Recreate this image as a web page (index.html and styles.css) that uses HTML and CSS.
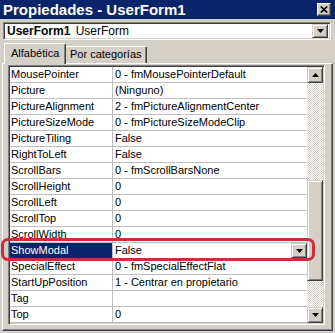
FILE: index.html
```html
<!DOCTYPE html>
<html lang="es">
<head>
    <meta charset="UTF-8">
    <meta name="viewport" content="width=device-width, initial-scale=1.0">
    <title>Propiedades</title>
    <link rel="stylesheet" href="styles.css">
</head>
<body>
    <div class="window">
        <div class="titlebar">
            <span class="title">Propiedades - UserForm1</span>
            <span class="close-btn">
                <svg width="8" height="7" viewBox="0 0 8 7"><path d="M0.8 0.5 L7.2 6.5 M7.2 0.5 L0.8 6.5" stroke="#000" stroke-width="1.7"/></svg>
            </span>
        </div>

        <div class="objcombo">
            <span class="objname"><b>UserForm1</b> UserForm</span>
            <span class="btn3d drop-btn">
                <svg width="7" height="4" viewBox="0 0 7 4"><polygon points="0,0 7,0 3.5,4" fill="#000"/></svg>
            </span>
        </div>

        <div class="tabs">
            <div class="tab active">Alfabética</div>
            <div class="tab">Por categorías</div>
        </div>

        <div class="panel">
            <div class="grid">
                <div class="rows">
                    <div class="row"><div class="name">MousePointer</div><div class="value">0 - fmMousePointerDefault</div></div>
                    <div class="row"><div class="name">Picture</div><div class="value">(Ninguno)</div></div>
                    <div class="row"><div class="name">PictureAlignment</div><div class="value">2 - fmPictureAlignmentCenter</div></div>
                    <div class="row"><div class="name">PictureSizeMode</div><div class="value">0 - fmPictureSizeModeClip</div></div>
                    <div class="row"><div class="name">PictureTiling</div><div class="value">False</div></div>
                    <div class="row"><div class="name">RightToLeft</div><div class="value">False</div></div>
                    <div class="row"><div class="name">ScrollBars</div><div class="value">0 - fmScrollBarsNone</div></div>
                    <div class="row"><div class="name">ScrollHeight</div><div class="value">0</div></div>
                    <div class="row"><div class="name">ScrollLeft</div><div class="value">0</div></div>
                    <div class="row"><div class="name">ScrollTop</div><div class="value">0</div></div>
                    <div class="row"><div class="name">ScrollWidth</div><div class="value">0</div></div>
                    <div class="row selected">
                        <div class="name">ShowModal</div>
                        <div class="value">
                            <span>False</span>
                            <span class="btn3d cell-btn">
                                <svg width="7" height="4" viewBox="0 0 7 4"><polygon points="0,0 7,0 3.5,4" fill="#000"/></svg>
                            </span>
                        </div>
                    </div>
                    <div class="row"><div class="name">SpecialEffect</div><div class="value">0 - fmSpecialEffectFlat</div></div>
                    <div class="row"><div class="name">StartUpPosition</div><div class="value">1 - Centrar en propietario</div></div>
                    <div class="row"><div class="name">Tag</div><div class="value"></div></div>
                    <div class="row"><div class="name">Top</div><div class="value">0</div></div>
                </div>

                <div class="scrollbar">
                    <span class="btn3d scroll-btn">
                        <svg width="7" height="4" viewBox="0 0 7 4"><polygon points="3.5,0 7,4 0,4" fill="#000"/></svg>
                    </span>
                    <div class="track-top"></div>
                    <div class="btn3d thumb"></div>
                    <div class="track-bottom"></div>
                    <span class="btn3d scroll-btn">
                        <svg width="7" height="4" viewBox="0 0 7 4"><polygon points="0,0 7,0 3.5,4" fill="#000"/></svg>
                    </span>
                </div>
            </div>
        </div>

        <!-- marca roja alrededor de ShowModal -->
        <div class="mark"></div>
    </div>
</body>
</html>
```

FILE: styles.css
```css
body {
    margin: 0;
    background-color: #d4d0c8;
    font-family: "Liberation Sans", Arial, sans-serif;
    font-size: 11px;
    color: #000;
}

.window {
    position: relative;
    width: 335px;
    height: 333px;
    overflow: hidden;
}

.titlebar {
    height: 19px;
    background-color: #0a246a;
    display: flex;
    align-items: center;
    justify-content: space-between;
    padding: 0 4px 0 3px;
}

.title {
    color: #fff;
    font-weight: bold;
    font-size: 15px;
}

.close-btn {
    box-sizing: border-box;
    width: 14px;
    height: 13px;
    background-color: #d4d0c8;
    border: 1px solid;
    border-color: #fff #404040 #404040 #fff;
    box-shadow: inset -1px -1px #808080;
    display: flex;
    align-items: center;
    justify-content: center;
}

.btn3d {
    box-sizing: border-box;
    background-color: #d4d0c8;
    border: 1px solid;
    border-color: #d4d0c8 #404040 #404040 #d4d0c8;
    box-shadow: inset 1px 1px #fff, inset -1px -1px #808080;
    display: flex;
    align-items: center;
    justify-content: center;
}

.objcombo {
    box-sizing: border-box;
    height: 18px;
    margin: 3px 4px 0 3px;
    background-color: #fff;
    border: 1px solid;
    border-color: #808080 #fff #fff #808080;
    box-shadow: inset 1px 1px #404040, inset -1px -1px #d4d0c8;
    display: flex;
    align-items: center;
    justify-content: space-between;
    padding: 1px 2px 1px 3px;
    font-size: 12px;
}

.objname b {
    margin-right: 2px;
}

.drop-btn {
    width: 16px;
    height: 14px;
}

.tabs {
    display: flex;
    align-items: flex-end;
    height: 20px;
    margin-top: 3px;
    padding-left: 4px;
}

.tab {
    box-sizing: border-box;
    height: 17px;
    padding: 0 4px 0 4px;
    line-height: 15px;
    white-space: nowrap;
    border: 1px solid;
    border-bottom: none;
    border-color: #fff #404040 #fff #fff;
    border-radius: 2px 2px 0 0;
    box-shadow: inset -1px 0 #808080;
}

.tab.active {
    position: relative;
    z-index: 1;
    height: 21px;
    width: 62px;
    margin-bottom: -1px;
    line-height: 19px;
    padding: 0 0 0 6px;
    background-color: #d4d0c8;
}

.tab + .tab {
    border-left: none;
}

.panel {
    box-sizing: border-box;
    height: 268px;
    margin: 0 2px;
    border: 1px solid;
    border-color: #fff #404040 #404040 #fff;
    box-shadow: inset -1px -1px #808080;
    padding: 1px 0 0 5px;
}

.grid {
    box-sizing: border-box;
    width: 317px;
    height: 260px;
    border: 1px solid;
    border-color: #808080 #fff #fff #808080;
    box-shadow: inset 1px 1px #404040, inset -1px -1px #d4d0c8;
    padding: 1px;
    display: flex;
    background-color: #fff;
}

.rows {
    width: 297px;
}

.row {
    box-sizing: border-box;
    height: 16px;
    display: flex;
    border-bottom: 1px solid #c0c0c0;
    line-height: 15px;
    white-space: nowrap;
}

.name {
    box-sizing: border-box;
    width: 103px;
    padding-left: 1px;
    border-right: 1px solid #c0c0c0;
    overflow: hidden;
}

.value {
    flex: 1;
    padding-left: 2px;
    display: flex;
    justify-content: space-between;
    overflow: hidden;
}

.row.selected .name {
    background-color: #0a246a;
    color: #fff;
}

.cell-btn {
    width: 16px;
    height: 15px;
}

.scrollbar {
    width: 16px;
    display: flex;
    flex-direction: column;
    background: repeating-conic-gradient(#fff 0 25%, #d4d0c8 0 50%) 0 0 / 2px 2px;
}

.scroll-btn {
    width: 16px;
    height: 16px;
}

.track-top {
    height: 97px;
}

.thumb {
    height: 101px;
}

.track-bottom {
    flex: 1;
}

.mark {
    position: absolute;
    left: 1px;
    top: 238px;
    width: 314px;
    height: 23px;
    box-sizing: border-box;
    border: 3px solid #cc2f3b;
    border-radius: 7px;
}
```
